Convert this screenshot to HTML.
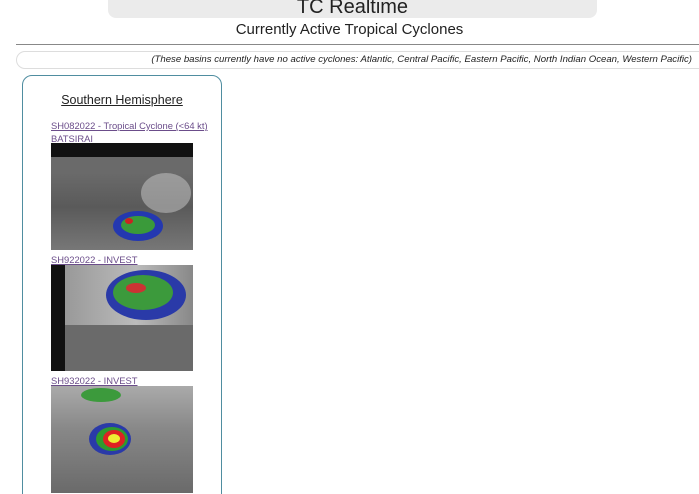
<!DOCTYPE html><html><head><style>
html,body{margin:0;width:699px;height:494px;overflow:hidden;background:#fff;font-family:"Liberation Sans",sans-serif;color:#222;position:relative}
.hdr{position:absolute;left:108px;top:-10px;width:489px;height:28px;background:#ebebeb;border-radius:8px;text-align:center;font-size:20px;line-height:22px;padding-top:6px;box-sizing:border-box}
.sub{position:absolute;left:0;width:699px;top:21px;text-align:center;font-size:15px}
.line{position:absolute;left:16px;right:0;top:44px;height:1px;background:#888}
.pill{position:absolute;left:16px;right:-10px;top:51px;height:18px;border:1px solid #ddd;border-radius:9px;box-sizing:border-box;font-style:italic;font-size:9.6px;line-height:16px;text-align:right;padding-right:16px}
.panel{position:absolute;left:22px;top:75px;width:200px;height:440px;border:1.5px solid #4f8da0;border-radius:10px;box-sizing:border-box}
.sh{position:absolute;left:22px;width:200px;top:93px;text-align:center;font-size:12.5px;text-decoration:underline}
a{position:absolute;left:51px;font-size:9.4px;color:#6b4d8a;text-decoration:underline;white-space:nowrap}
.img{position:absolute;left:51px;width:142px;background:#555;overflow:hidden}
.img div{position:absolute;border-radius:50%}
</style></head><body>
<div class="hdr">TC Realtime</div>
<div class="sub">Currently Active Tropical Cyclones</div>
<div class="line"></div>
<div class="pill">(These basins currently have no active cyclones: Atlantic, Central Pacific, Eastern Pacific, North Indian Ocean, Western Pacific)</div>
<div class="panel"></div>
<div class="sh">Southern Hemisphere</div>
<a style="top:120px">SH082022 - Tropical Cyclone (&lt;64 kt)</a>
<a style="top:133px">BATSIRAI</a>
<div class="img" style="top:143px;height:107px;background:linear-gradient(#111 0 14px,#6a6a6a 14px 30px,#5a5a5a 60%,#777)">
<div style="left:90px;top:30px;width:50px;height:40px;background:#ccc;opacity:.5"></div>
<div style="left:62px;top:68px;width:50px;height:30px;background:#2438b0"></div>
<div style="left:70px;top:73px;width:34px;height:18px;background:#3a9a3a"></div>
<div style="left:74px;top:75px;width:8px;height:6px;background:#c22"></div>
</div>
<a style="top:254px">SH922022 - INVEST</a>
<div class="img" style="top:265px;height:106px;background:linear-gradient(90deg,#111 0 14px,#999 14px,#bbb 60%,#888)">
<div style="left:55px;top:5px;width:80px;height:50px;background:#2a3aa8"></div>
<div style="left:62px;top:10px;width:60px;height:35px;background:#3c9a3c"></div>
<div style="left:75px;top:18px;width:20px;height:10px;background:#c33"></div>
<div style="left:14px;top:60px;width:128px;height:46px;border-radius:0;background:#6a6a6a"></div>
</div>
<a style="top:375px">SH932022 - INVEST</a>
<div class="img" style="top:386px;height:107px;background:linear-gradient(#aaa,#888 40%,#6a6a6a)">
<div style="left:38px;top:37px;width:42px;height:32px;background:#2a3aa8"></div>
<div style="left:45px;top:41px;width:32px;height:24px;background:#2f9a2f"></div>
<div style="left:52px;top:44px;width:22px;height:18px;background:#d22"></div>
<div style="left:57px;top:48px;width:12px;height:9px;background:#ee3"></div>
<div style="left:30px;top:2px;width:40px;height:14px;background:#3c9a3c"></div>
</div>
</body></html>
